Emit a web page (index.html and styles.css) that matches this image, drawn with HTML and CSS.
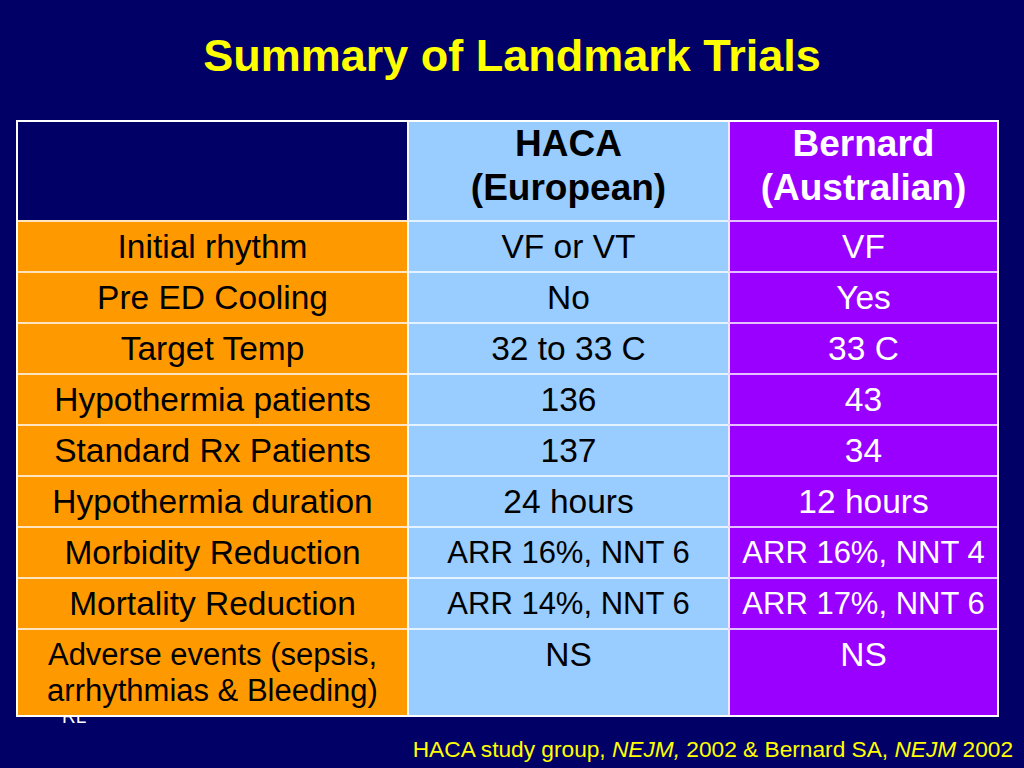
FILE: index.html
```html
<!DOCTYPE html>
<html lang="en">
<head>
<meta charset="utf-8">
<title>Summary of Landmark Trials</title>
<link rel="stylesheet" href="styles.css">
</head>
<body>
<div class="slide">
  <h1 class="title">Summary of Landmark Trials</h1>
  <div class="table-wrap">
    <span class="initials">RL</span>
    <div class="grid">
      <div class="cell head blank"></div>
      <div class="cell head c2">HACA<br>(European)</div>
      <div class="cell head c3">Bernard<br>(Australian)</div>

      <div class="cell c1">Initial rhythm</div>
      <div class="cell c2">VF or VT</div>
      <div class="cell c3">VF</div>

      <div class="cell c1">Pre ED Cooling</div>
      <div class="cell c2">No</div>
      <div class="cell c3">Yes</div>

      <div class="cell c1">Target Temp</div>
      <div class="cell c2">32 to 33 C</div>
      <div class="cell c3">33 C</div>

      <div class="cell c1">Hypothermia patients</div>
      <div class="cell c2">136</div>
      <div class="cell c3">43</div>

      <div class="cell c1">Standard Rx Patients</div>
      <div class="cell c2">137</div>
      <div class="cell c3">34</div>

      <div class="cell c1">Hypothermia duration</div>
      <div class="cell c2">24 hours</div>
      <div class="cell c3">12 hours</div>

      <div class="cell c1">Morbidity Reduction</div>
      <div class="cell c2 small">ARR 16%, NNT 6</div>
      <div class="cell c3 small">ARR 16%, NNT 4</div>

      <div class="cell c1">Mortality Reduction</div>
      <div class="cell c2 small">ARR 14%, NNT 6</div>
      <div class="cell c3 small">ARR 17%, NNT 6</div>

      <div class="cell c1 small">Adverse events (sepsis,<br>arrhythmias &amp; Bleeding)</div>
      <div class="cell c2">NS</div>
      <div class="cell c3">NS</div>
    </div>
  </div>
  <p class="footer">HACA study group, <em>NEJM,</em> 2002 &amp; Bernard SA, <em>NEJM</em> 2002</p>
</div>
</body>
</html>
```

FILE: styles.css
```css
html, body {
  margin: 0;
  padding: 0;
  background: #000066;
}

.slide {
  width: 1024px;
  height: 768px;
  overflow: hidden;
  font-family: "Liberation Sans", Arial, sans-serif;
  background: #000066;
  display: flex;
  flex-direction: column;
}

.title {
  margin: 0;
  padding-top: 30px;
  height: 120px;
  box-sizing: border-box;
  text-align: center;
  color: #ffff00;
  font-size: 45px;
  line-height: 52px;
  font-weight: bold;
}

.table-wrap {
  position: relative;
  margin-left: 16px;
  width: 983px;
}

.initials {
  position: absolute;
  left: 46px;
  top: 586px;
  font-size: 19px;
  line-height: 22px;
  color: #ffffff;
  z-index: 0;
}

.grid {
  position: relative;
  z-index: 1;
  display: grid;
  grid-template-columns: 389px 321px 269px;
  grid-template-rows: 98px repeat(8, 51px) 87px;
  border: 2px solid #ffffff;
  background: #000066;
}

.cell {
  box-sizing: border-box;
  text-align: center;
  font-size: 33.5px;
  line-height: 36px;
  padding-top: 7px;
  border-top: 2px solid rgba(255, 255, 255, 0.75);
}

.cell.head {
  border-top: none;
  font-weight: bold;
  font-size: 37px;
  line-height: 44px;
  padding-top: 0;
}

.c1 {
  background: #ff9900;
  color: #000000;
}

.blank {
  background: #000066;
}

.c2 {
  background: #99ccff;
  color: #000000;
  border-left: 2px solid rgba(255, 255, 255, 0.9);
}

.c3 {
  background: #9900ff;
  color: #ffffff;
  border-left: 2px solid rgba(255, 255, 255, 0.9);
}

.cell.small {
  font-size: 31px;
}

.footer {
  margin: 19px 11px 0 0;
  text-align: right;
  color: #ffff00;
  font-size: 22.7px;
  line-height: 26px;
}

.footer em {
  font-style: italic;
}
```
